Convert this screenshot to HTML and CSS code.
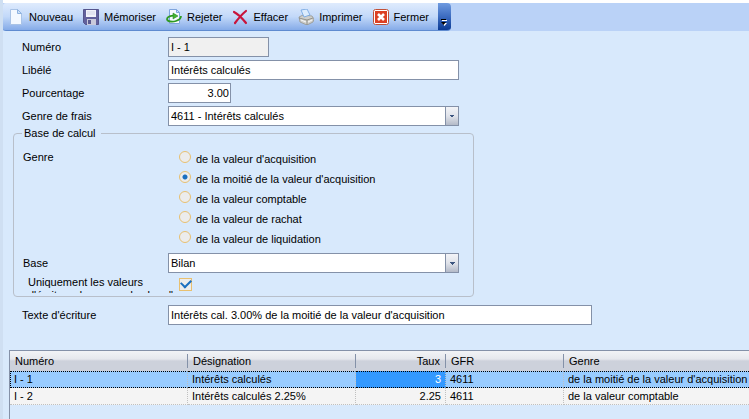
FILE: index.html
```html
<!doctype html>
<html lang="fr">

<head>
    <meta charset="UTF-8" />
    <meta name="viewport" content="width=device-width, initial-scale=1.0" />
    <title>Intérêts calculés</title>
    <link rel="stylesheet" href="styles.css">
</head>

<body>
    <!-- Toolbar -->
    <header class="toolbar-strip">
        <div class="toolbar">
            <button type="button" class="tool">
                <svg class="icon" viewBox="0 0 16 16">
                    <path d="M2.500 0.500h7l4 4v11h-11z" fill="#f4f9ff" stroke="#a9c3e6" />
                    <path d="M9.500 0.500v4h4z" fill="#cfe2f8" stroke="#8fb3e0" />
                </svg>
                Nouveau
            </button>
            <button type="button" class="tool">
                <svg class="icon" viewBox="0 0 16 16">
                    <path d="M0.500 0.500h15v15h-13l-2-2z" fill="#62619c" stroke="#55548c" />
                    <path d="M3 1h10v7h-10z" fill="#f2f3fa" />
                    <path d="M4 3h8M4 5h8" stroke="#d3d5e6" />
                    <path d="M4 10h9v6h-9z" fill="#c9cadb" />
                    <path d="M5 11h3v4h-3z" fill="#5b5a90" />
                </svg>
                Mémoriser
            </button>
            <button type="button" class="tool">
                <svg class="icon" viewBox="0 0 16 16">
                    <path d="M3.500 0.500h7l3 3v11h-10z" fill="#f5f9ff" stroke="#7fa4dc" />
                    <path d="M10.500 0.500v3h3z" fill="#cfe2f8" stroke="#7fa4dc" />
                    <path d="M10 7C5 6 1 8 1 10c0 3 6 3 9 2 3-1 5-2 5-5" fill="none" stroke="#2f9a22" stroke-width="1.800" />
                    <path d="M7 4l5 3-5 3z" fill="#45b531" stroke="#1f7d18" stroke-width=".5" />
                </svg>
                Rejeter
            </button>
            <button type="button" class="tool">
                <svg class="icon" viewBox="0 0 16 16">
                    <path d="M2 3c4 2 8 6 12 11M14 2C9 6 6 10 3 14" fill="none" stroke="#c8143c" stroke-width="2.200" stroke-linecap="round" />
                </svg>
                Effacer
            </button>
            <button type="button" class="tool">
                <svg class="icon" viewBox="0 0 16 16">
                    <path d="M1 8l4-2 9 1 2 3-1 3-6 3-7-3z" fill="#cfcfcc" stroke="#95958f" stroke-width=".8" />
                    <path d="M3 1l6-1 3 6-6 2z" fill="#dcecfd" stroke="#6fa2e0" stroke-width=".8" />
                    <path d="M1 9l8 2 6-2M9 11v5" fill="none" stroke="#85857c" stroke-width=".8" />
                    <path d="M3 11l5 2M10 13l4-2" stroke="#f7f7f7" />
                </svg>
                Imprimer
            </button>
            <button type="button" class="tool">
                <svg class="icon" viewBox="0 0 16 16">
                    <rect x="0.500" y="0.500" width="15" height="15" rx="2" fill="#fff" stroke="#c05038" />
                    <rect x="2" y="2" width="12" height="12" fill="#dc4023" />
                    <path d="M5 5l6 6M11 5l-6 6" stroke="#fff" stroke-width="2.600" />
                </svg>
                Fermer
            </button>
            <button type="button" class="overflow" aria-label="Autres boutons">
                <svg class="overflow-icon" viewBox="0 0 6 7">
                    <path d="M1 1h5v1h-5zM1 4h5l-2.500 3z" fill="#fff" />
                    <path d="M0 0h5v1h-5zM0 3h5l-2.500 3z" fill="#000" />
                </svg>
            </button>
        </div>
    </header>

    <main>
        <form class="form">
            <div class="row">
                <label for="numero">Numéro</label>
                <input type="text" id="numero" class="field short" value="I - 1" readonly />
            </div>
            <div class="row">
                <label for="libele">Libélé</label>
                <input type="text" id="libele" class="field" value="Intérêts calculés" />
            </div>
            <div class="row">
                <label for="pourcentage">Pourcentage</label>
                <input type="text" id="pourcentage" class="field number" value="3.00" />
            </div>
            <div class="row">
                <label for="frais">Genre de frais</label>
                <select id="frais" class="field">
                    <option>4611 - Intérêts calculés</option>
                </select>
            </div>

            <fieldset class="base">
                <legend>Base de calcul</legend>
                <div class="row genre" role="radiogroup" aria-labelledby="genre-label">
                    <span id="genre-label" class="label">Genre</span>
                    <div class="choices">
                        <label><input type="radio" name="genre" />de la valeur d'acquisition</label>
                        <label><input type="radio" name="genre" checked />de la moitié de la valeur d'acquisition</label>
                        <label><input type="radio" name="genre" />de la valeur comptable</label>
                        <label><input type="radio" name="genre" />de la valeur de rachat</label>
                        <label><input type="radio" name="genre" />de la valeur de liquidation</label>
                    </div>
                </div>
                <div class="row">
                    <label for="base">Base</label>
                    <select id="base" class="field">
                        <option>Bilan</option>
                    </select>
                </div>
                <div class="row only">
                    <label for="uniquement">Uniquement les valeurs<br>d'écriture des cours de chan "</label>
                    <input type="checkbox" id="uniquement" checked />
                </div>
            </fieldset>

            <div class="row">
                <label for="texte">Texte d'écriture</label>
                <input type="text" id="texte" class="field wide" value="Intérêts cal. 3.00% de la moitié de la valeur d'acquisition" />
            </div>
        </form>

        <!-- List -->
        <div class="grid">
            <table>
                <colgroup>
                    <col class="col-numero">
                    <col class="col-designation">
                    <col class="col-taux">
                    <col class="col-gfr">
                    <col>
                </colgroup>
                <thead>
                    <tr>
                        <th><span>Numéro</span></th>
                        <th><span>Désignation</span></th>
                        <th class="num"><span>Taux</span></th>
                        <th><span>GFR</span></th>
                        <th><span>Genre</span></th>
                    </tr>
                </thead>
                <tbody>
                    <tr class="selected">
                        <td>I - 1</td>
                        <td>Intérêts calculés</td>
                        <td class="num current">3</td>
                        <td>4611</td>
                        <td>de la moitié de la valeur d'acquisition</td>
                    </tr>
                    <tr>
                        <td>I - 2</td>
                        <td>Intérêts calculés 2.25%</td>
                        <td class="num">2.25</td>
                        <td>4611</td>
                        <td>de la valeur comptable</td>
                    </tr>
                </tbody>
            </table>
        </div>
    </main>
</body>

</html>
```
FILE: styles.css
```css
* {
    box-sizing: border-box;
}

body {
    margin: 0;
    min-height: 100vh;
    border-left: 3px solid #cfdff2;
    background: #d8e9fc;
    color: #000;
    font: 11px/16px "Liberation Sans", Arial, sans-serif;
    display: flex;
    flex-direction: column;
}

button,
input,
select {
    font: inherit;
    color: inherit;
    margin: 0;
}

/* Toolbar */
.toolbar-strip {
    display: flex;
    background: #bad2f7;
    border-top: 3px solid #fff;
}

.toolbar {
    display: flex;
    height: 28px;
    border-bottom: 1px solid #5f8bd0;
    border-radius: 3px 4px 4px 3px;
    background: linear-gradient(#dfebfd, #c3d9f9 50%, #85abe8);
    overflow: hidden;
}

.tool {
    display: flex;
    align-items: center;
    gap: 5px;
    padding: 0 5px;
    border: 0;
    background: none;
    white-space: nowrap;
}

.icon {
    width: 16px;
    height: 16px;
}

.overflow {
    display: flex;
    align-items: flex-end;
    justify-content: center;
    width: 13px;
    margin-left: 4px;
    padding: 0 0 4px;
    border: 0;
    background: linear-gradient(#6f9be0, #3d6cc0 50%, #0b3a93);
}

.overflow-icon {
    width: 6px;
    height: 7px;
}

/* Form */
main {
    flex: 1;
    display: flex;
    flex-direction: column;
}

.form {
    padding: 6px 10px 0;
}

.row {
    display: flex;
    align-items: center;
    margin-bottom: 3px;
}

.row > label,
.row > .label {
    flex: none;
    width: 155px;
    padding-left: 9px;
}

.field {
    width: 291px;
    height: 20px;
    padding: 0 2px;
    border: 1px solid #8491a8;
    border-radius: 0;
    background: #fff;
    outline: none;
}

.field.short {
    width: 101px;
    background: #f0f0f0;
}

.field.number {
    width: 63px;
    padding-right: 1px;
    text-align: right;
}

.field.wide {
    width: 424px;
}

select.field {
    appearance: none;
    background:
        conic-gradient(from -45deg at 50% 100%, #3c557f 90deg, transparent 0) right 3px top 8px / 6px 3px no-repeat,
        linear-gradient(#8491a8, #8491a8) right 12px top 0 / 1px 100% no-repeat,
        linear-gradient(#f3f4f8, #e0e3ea 50%, #b4bac8) right / 12px 100% no-repeat,
        #fff;
}

.base {
    width: 461px;
    margin: -4px 0 8px;
    padding: 0 0 3px;
    border: 1px solid #b8bfca;
    border-radius: 4px;
}

.base legend {
    margin-left: 8px;
    padding: 0 5px 0 2px;
}

.base .row > label,
.base .row > .label {
    width: 154px;
}

.base .genre {
    align-items: flex-start;
    margin-bottom: 4px;
    padding-top: 8px;
}

.choices {
    display: flex;
    flex-direction: column;
    padding-left: 11px;
}

.choices label {
    display: flex;
    align-items: center;
    gap: 5px;
    height: 20px;
}

.choices input {
    appearance: none;
    width: 12px;
    height: 12px;
    margin-bottom: 4px;
    border: 1px solid #e8c070;
    border-radius: 50%;
    background: #ececec;
}

.choices input:checked {
    background: radial-gradient(circle, #1a6fc0 0 2px, #ececec 3px);
}

/* the second line of this label is cut by the group box */
.base .only {
    align-items: flex-start;
    height: 17px;
    margin: 0;
    overflow: hidden;
}

.only > label {
    line-height: 13px;
    white-space: nowrap;
}

.base .only > label {
    padding-left: 14px;
}

.only input {
    appearance: none;
    width: 13px;
    height: 13px;
    margin: 2px 0 0 11px;
    border: 1px solid #e8c070;
    background: #ececec;
    display: grid;
    place-items: center;
}

.only input:checked::before {
    content: "";
    width: 8px;
    height: 5px;
    margin-bottom: 4px;
    border: solid #1a6fc0;
    border-width: 0 0 2px 2px;
    transform: rotate(-45deg);
}

/* List */
.grid {
    flex: 1;
    margin: 22px 0 0 6px;
    border: solid #8491a8;
    border-width: 1px 0 0 1px;
}

table {
    width: 100%;
    table-layout: fixed;
    border-collapse: separate;
    border-spacing: 0;
}

.col-numero {
    width: 178px;
}

.col-designation {
    width: 168px;
}

.col-taux {
    width: 90px;
}

.col-gfr {
    width: 118px;
}

th,
td {
    padding: 0 4px;
    text-align: left;
    font-weight: normal;
    white-space: nowrap;
}

thead tr {
    background: linear-gradient(#f2f3f6, #e6e8ed 40%, #cdd1db 50%, #cdd1db);
}

th {
    height: 20px;
    padding: 3px 0;
    line-height: 14px;
}

th span {
    display: block;
    padding: 0 5px;
    border-right: 1px solid #8491a8;
}

th:last-child span {
    border: 0;
}

td {
    height: 17px;
    line-height: 15px;
    border-right: 1px dotted #c0c0c0;
    border-bottom: 1px dotted #c0c0c0;
    background: #f4f4f4;
}

td:last-child {
    border-right: 0;
}

.num {
    text-align: right;
}

.selected td {
    background: #99ccff;
    border-top: 1px dotted #000;
    border-bottom-color: #000;
}

.selected td:first-child {
    padding-left: 3px;
    border-left: 1px dotted #000;
}

.selected .current {
    background: #3399ff;
    color: #fff;
}
```
